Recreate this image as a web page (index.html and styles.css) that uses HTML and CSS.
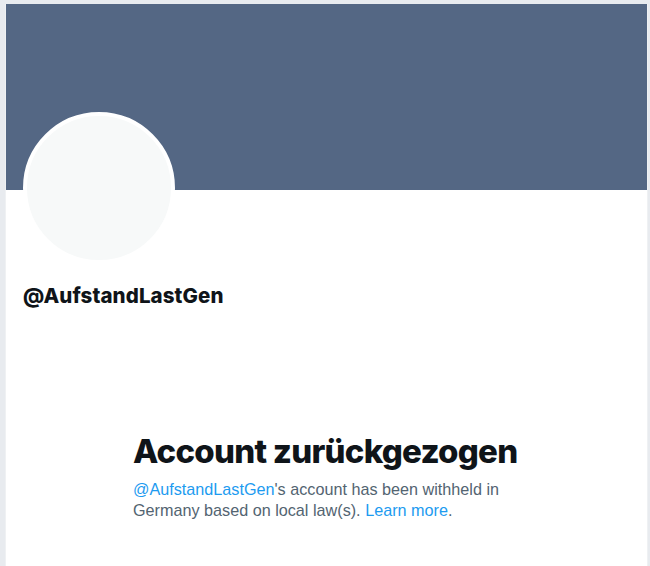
FILE: index.html
```html
<!DOCTYPE html>
<html lang="en">
<head>
  <meta charset="UTF-8">
  <title>@AufstandLastGen</title>
  <link rel="stylesheet" href="styles.css">
</head>
<body>
  <div class="page">
    <div class="banner"></div>
    <div class="profile">
      <div class="avatar-row">
        <div class="avatar"></div>
      </div>
      <div class="handle">@AufstandLastGen</div>
    </div>
    <div class="withheld">
      <h1 class="withheld-title">Account zurückgezogen</h1>
      <p class="withheld-text">
        <a href="#">@AufstandLastGen</a>'s account has been withheld in
        Germany based on local law(s). <a href="#">Learn more</a>.
      </p>
    </div>
  </div>
</body>
</html>
```

FILE: styles.css
```css
body {
  margin: 0;
  background: #e8ebef;
  font-family: "Liberation Sans", Arial, sans-serif;
  color: #0f1419;
}
.page {
  margin: 4px 2px 0 5px;
  background: #fff;
  border-left: 1px solid #eff1f3;
  border-right: 1px solid #eff1f3;
  height: 562px;
}
.banner {
  background: #546784;
  height: 186px;
}
.profile {
  padding: 0 17px;
}
.avatar-row {
  margin-top: -78px;
  height: 80px;
}
.avatar {
  width: 144px;
  height: 144px;
  border-radius: 50%;
  background: #f7f9f9;
  border: 4px solid #fff;
}
.handle {
  margin-top: 91px;
  font-family: Inter, "Liberation Sans", sans-serif;
  font-size: 20.5px;
  font-weight: 800;
  letter-spacing: 0.1px;
}
.withheld {
  padding: 0 0 0 127px;
  margin-top: 123px;
}
.withheld-title {
  margin: 0;
  font-family: Inter, "Liberation Sans", sans-serif;
  font-size: 33px;
  font-weight: 800;
  line-height: 40px;
  letter-spacing: -0.75px;
}
.withheld-text {
  margin: 8px 0 0;
  font-size: 16.2px;
  line-height: 21px;
  color: #536471;
  width: 380px;
}
.withheld-text a {
  color: #1d9bf0;
  text-decoration: none;
}
```
